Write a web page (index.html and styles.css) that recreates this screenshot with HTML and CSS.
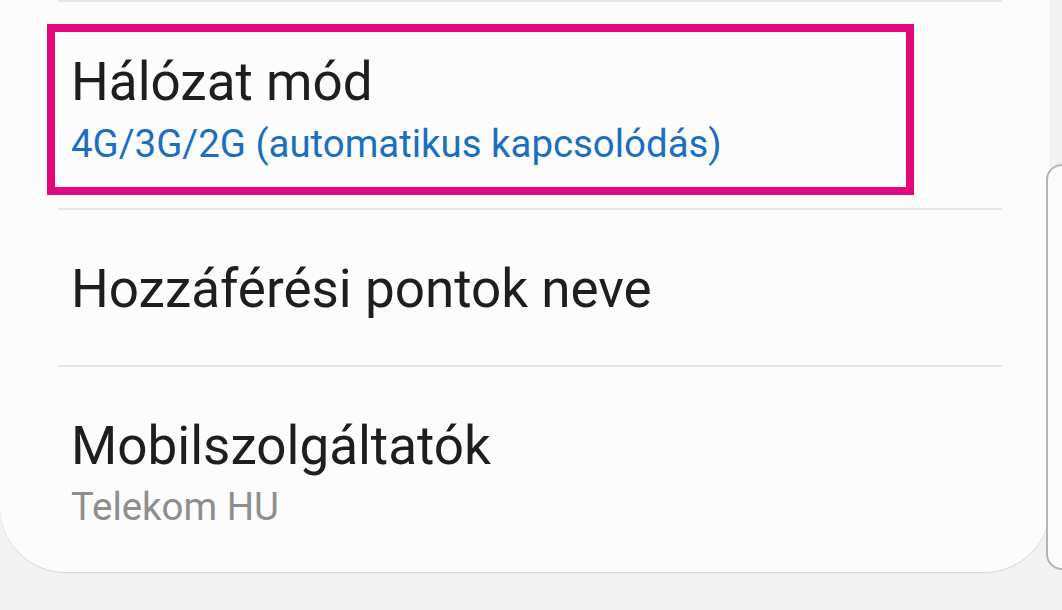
FILE: index.html
```html
<!doctype html>
<html>

<head>
  <meta charset="UTF-8">
  <title>Mobilhálózatok</title>
  <link rel="stylesheet" href="styles.css">
</head>

<body>
  <div class="screen">
    <div class="card">
      <div class="divider"></div>

      <div class="row highlight">
        <div class="title">Hálózat mód</div>
        <div class="sub blue">4G/3G/2G (automatikus kapcsolódás)</div>
      </div>

      <div class="divider after-box"></div>

      <div class="row">
        <div class="title">Hozzáférési pontok neve</div>
      </div>

      <div class="divider"></div>

      <div class="row last">
        <div class="title">Mobilszolgáltatók</div>
        <div class="sub grey">Telekom HU</div>
      </div>
    </div>

    <div class="scroller"></div>
  </div>
</body>

</html>
```

FILE: styles.css
```css
body {
  margin: 0;
  background: #f2f2f2;
  font-family: Roboto, "Noto Sans", sans-serif;
}

.screen {
  position: relative;
  width: 1062px;
  height: 610px;
  overflow: hidden;
}

.card {
  width: 1050px;
  height: 572px;
  box-sizing: border-box;
  background: #fcfcfc;
  border-radius: 0 0 66px 66px;
  box-shadow: 0 1px 1px #d8d8d8;
  display: flex;
  flex-direction: column;
}

.divider {
  height: 2px;
  margin: 0 48px 0 58px;
  background: #e6e6e6;
}

.divider.after-box {
  margin-top: 13px;
}

.row {
  height: 155px;
  box-sizing: border-box;
  padding: 48px 0 0 71px;
}

.row.last {
  height: auto;
  flex: 1;
}

.row.highlight {
  height: 171px;
  width: 867px;
  margin: 22px 0 0 47px;
  padding: 19px 0 0 16px;
  border: 8px solid #e2077b;
}

.title {
  font-size: 53px;
  line-height: 62px;
  color: #1e1e1e;
}

.sub {
  font-size: 38.4px;
  line-height: 46px;
  margin-top: 8px;
}

.row.last .sub {
  margin-top: 7px;
}

.blue {
  color: #1a6fc0;
}

.grey {
  color: #8e8e8e;
}

.scroller {
  position: absolute;
  left: 1046px;
  top: 164px;
  width: 40px;
  height: 406px;
  box-sizing: border-box;
  border: 2px solid #b4b4b4;
  border-radius: 16px;
  background: #fcfcfc;
}
```
